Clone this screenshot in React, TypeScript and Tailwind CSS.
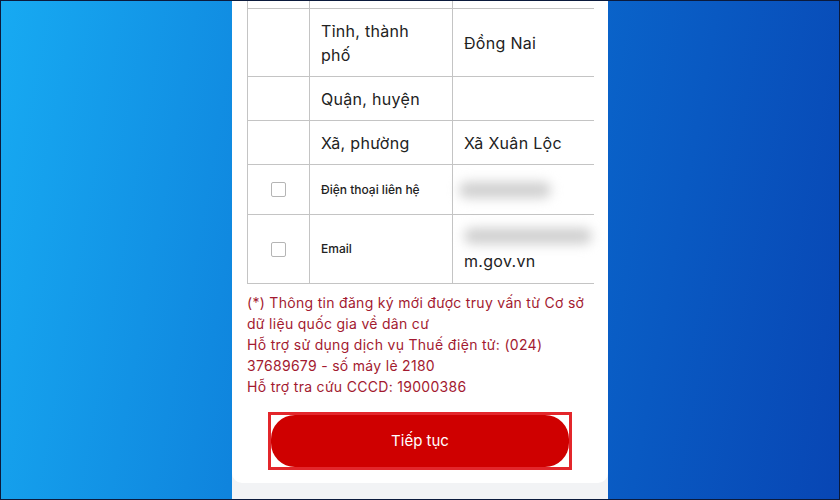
import React from 'react';

const font = { fontFamily: 'Inter, "Noto Sans", sans-serif' };

// ô mờ che thông tin cá nhân
const Blur = ({ className }: { className: string }) => (
  <div className={`rounded-full bg-[#cfcfcf] blur-[6px] ${className}`} />
);

const Checkbox = () => (
  <div className="w-[15px] h-[15px] rounded-[2px] border border-[#b5b5b5] bg-white" />
);

export default function App() {
  return (
    <div
      className="w-[840px] h-[500px] border border-[#0b1a3c] bg-[linear-gradient(100deg,#17aaf2,#0a6cd0_55%,#0846b4)] flex justify-center overflow-hidden"
      style={font}
    >
      <div className="w-[376px] h-full bg-[#f2f3f5] flex flex-col">
        <div className="bg-white rounded-b-[10px] px-[15px] pb-[13px]">
          {/* Bảng thông tin */}
          <div className="grid grid-cols-[61px_143px_142px] border-l border-[#c4c4c4] text-[16px] text-[#222] tracking-[0.3px]">
            <div className="h-[8px] border-b border-[#c4c4c4]" />
            <div className="h-[8px] border-b border-l border-[#c4c4c4]" />
            <div className="h-[8px] border-b border-l border-[#c4c4c4]" />

            <div className="h-[68px] border-b border-[#c4c4c4]" />
            <div className="h-[68px] border-b border-l border-[#c4c4c4] flex items-center pl-[11px] pr-[20px] leading-[24px]">
              Tỉnh, thành phố
            </div>
            <div className="h-[68px] border-b border-l border-[#c4c4c4] flex items-center px-[11px]">
              Đồng Nai
            </div>

            <div className="h-[44px] border-b border-[#c4c4c4]" />
            <div className="h-[44px] border-b border-l border-[#c4c4c4] flex items-center px-[11px]">
              Quận, huyện
            </div>
            <div className="h-[44px] border-b border-l border-[#c4c4c4]" />

            <div className="h-[44px] border-b border-[#c4c4c4]" />
            <div className="h-[44px] border-b border-l border-[#c4c4c4] flex items-center px-[11px]">
              Xã, phường
            </div>
            <div className="h-[44px] border-b border-l border-[#c4c4c4] flex items-center px-[11px]">
              Xã Xuân Lộc
            </div>

            <div className="h-[50px] border-b border-[#c4c4c4] flex items-center justify-center">
              <Checkbox />
            </div>
            <div className="h-[50px] border-b border-l border-[#c4c4c4] flex items-center px-[11px] text-[12px] font-medium tracking-normal">
              Điện thoại liên hệ
            </div>
            <div className="h-[50px] border-b border-l border-[#c4c4c4] flex items-center pl-[6px]">
              <Blur className="w-[92px] h-[16px]" />
            </div>

            <div className="h-[69px] border-b border-[#c4c4c4] flex items-center justify-center">
              <Checkbox />
            </div>
            <div className="h-[69px] border-b border-l border-[#c4c4c4] flex items-center px-[11px] text-[12px] font-medium tracking-normal">
              Email
            </div>
            <div className="h-[69px] border-b border-l border-[#c4c4c4] flex flex-col justify-center px-[11px]">
              <Blur className="w-[128px] h-[16px]" />
              <div className="mt-[7px] leading-[20px]">m.gov.vn</div>
            </div>
          </div>

          {/* Ghi chú */}
          <div className="mt-[8px] text-[14px] leading-[21px] text-[#a31a30] tracking-[0.3px]">
            <p>(*) Thông tin đăng ký mới được truy vấn từ Cơ sở dữ liệu quốc gia về dân cư</p>
            <p>Hỗ trợ sử dụng dịch vụ Thuế điện tử: (024) 37689679 - số máy lẻ 2180</p>
            <p>Hỗ trợ tra cứu CCCD: 19000386</p>
          </div>

          {/* Nút tiếp tục */}
          <div className="mx-auto mt-[15px] w-[304px] h-[58px] border-[3px] border-[#e3262b]">
            <button className="w-full h-full rounded-[24px] bg-[#cf0000] text-white text-[15px] font-normal">
              Tiếp tục
            </button>
          </div>
        </div>
      </div>
    </div>
  );
}
